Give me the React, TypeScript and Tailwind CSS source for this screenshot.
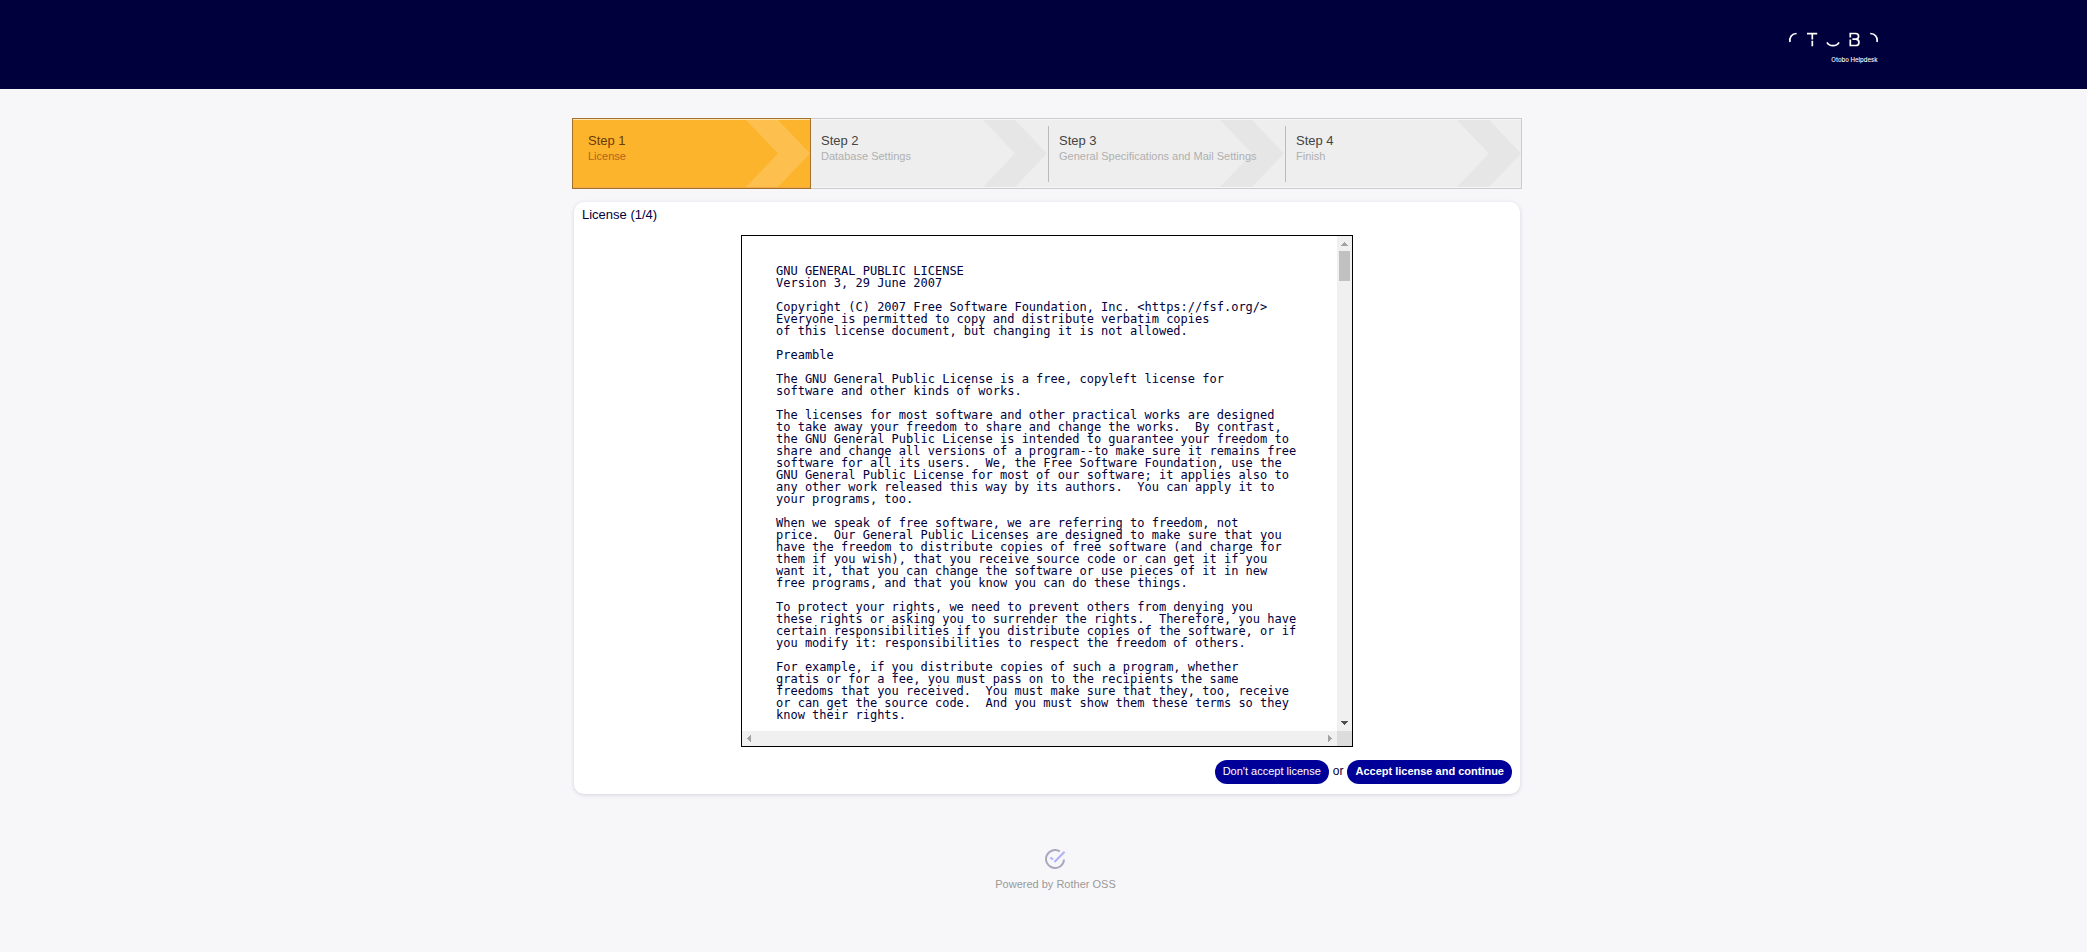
const LICENSE_TEXT = `GNU GENERAL PUBLIC LICENSE
Version 3, 29 June 2007

Copyright (C) 2007 Free Software Foundation, Inc. <https://fsf.org/>
Everyone is permitted to copy and distribute verbatim copies
of this license document, but changing it is not allowed.

Preamble

The GNU General Public License is a free, copyleft license for
software and other kinds of works.

The licenses for most software and other practical works are designed
to take away your freedom to share and change the works.  By contrast,
the GNU General Public License is intended to guarantee your freedom to
share and change all versions of a program--to make sure it remains free
software for all its users.  We, the Free Software Foundation, use the
GNU General Public License for most of our software; it applies also to
any other work released this way by its authors.  You can apply it to
your programs, too.

When we speak of free software, we are referring to freedom, not
price.  Our General Public Licenses are designed to make sure that you
have the freedom to distribute copies of free software (and charge for
them if you wish), that you receive source code or can get it if you
want it, that you can change the software or use pieces of it in new
free programs, and that you know you can do these things.

To protect your rights, we need to prevent others from denying you
these rights or asking you to surrender the rights.  Therefore, you have
certain responsibilities if you distribute copies of the software, or if
you modify it: responsibilities to respect the freedom of others.

For example, if you distribute copies of such a program, whether
gratis or for a fee, you must pass on to the recipients the same
freedoms that you received.  You must make sure that they, too, receive
or can get the source code.  And you must show them these terms so they
know their rights.`;

const STEPS = [
  { title: 'Step 1', label: 'License' },
  { title: 'Step 2', label: 'Database Settings' },
  { title: 'Step 3', label: 'General Specifications and Mail Settings' },
  { title: 'Step 4', label: 'Finish' },
];

function Logo() {
  return (
    <svg
      width="90"
      height="32"
      viewBox="0 0 90 32"
      fill="none"
      stroke="#ffffff"
      strokeWidth="1.7"
      role="img"
      aria-label="Otobo Helpdesk"
    >
      <path d="M2 10C1.2 5.2 3.8 1.6 8.6 1.5" />
      <path d="M19 1.6H29.2M24.3 1.6V7.4M24.3 8.8V14.2" />
      <path d="M39 10.4C41.4 14.8 48.6 14.8 51 10.4" />
      <path d="M62.3 5.4V1.5H67.6C71.6 1.5 71.6 7.2 67.6 7.2H64.4M67.8 7.2C72 7.4 72 13.5 67.8 13.5H62.3V7.4" />
      <path d="M82.2 1.5C87.2 1.6 89.8 5.2 89 10" />
      <text
        x="89.5"
        y="30"
        textAnchor="end"
        fontSize="6"
        fill="#ffffff"
        stroke="none"
        fontFamily="Inter, sans-serif"
        fontWeight="500"
      >
        Otobo Helpdesk
      </text>
    </svg>
  );
}

function Chevron({ active }: { active: boolean }) {
  return (
    <svg
      className={active ? 'text-[#fdc04f]' : 'text-[#e6e6e6]'}
      width="64"
      height="67"
      viewBox="0 0 64 67"
      fill="currentColor"
      aria-hidden="true"
    >
      <path d="M0 0H32L64 33.5L32 67H0L32 33.5Z" />
    </svg>
  );
}

function Steps() {
  return (
    <ol className="grid h-[71px] grid-cols-[239px_238px_237px_1fr] bg-[#eeeeee]">
      {STEPS.map((step, i) => {
        const active = i === 0;
        return (
          <li
            key={step.title}
            className={
              active
                ? 'relative flex border border-[#a56f2c] bg-[#fcb42c] pt-[14px] pl-[15px] shadow-[inset_0_1px_0_#fde3ae,inset_0_-1px_0_#f0a848]'
                : 'relative flex border-y border-[#cccccc] pt-[14px] pl-[10px] shadow-[inset_0_1px_0_#f5f5f5,inset_0_-1px_0_#f5f5f5] last:border-r'
            }
          >
            <div
              className={
                active || i === 3
                  ? 'absolute top-px right-0'
                  : 'absolute top-px right-[2px]'
              }
            >
              <Chevron active={active} />
            </div>
            {(i === 1 || i === 2) && (
              <span className="absolute top-[7px] right-0 h-14 w-px bg-[#bbbbbb]" />
            )}
            <div className="relative">
              <div
                className={
                  active
                    ? 'text-[13px] leading-4 text-[#6b3c05]'
                    : 'text-[13px] leading-4 text-[#444444]'
                }
              >
                {step.title}
              </div>
              <div
                className={
                  active
                    ? 'text-[11px] leading-[14px] text-[#b0651a]'
                    : 'text-[11px] leading-[14px] whitespace-nowrap text-[#b0b0b0]'
                }
              >
                {step.label}
              </div>
            </div>
          </li>
        );
      })}
    </ol>
  );
}

function Arrow({ d, dark = false }: { d: string; dark?: boolean }) {
  return (
    <svg
      width="15"
      height="15"
      viewBox="0 0 15 15"
      fill={dark ? '#505050' : '#a3a3a3'}
      shapeRendering="crispEdges"
      aria-hidden="true"
    >
      <path d={d} />
    </svg>
  );
}

function LicenseBox() {
  return (
    <div className="mx-auto grid h-[512px] w-[612px] max-w-full grid-cols-[1fr_15px] grid-rows-[1fr_15px] border border-black">
      <pre
        tabIndex={0}
        aria-label="License text"
        className="overflow-auto pt-[29px] pl-[34px] font-['DejaVu_Sans_Mono',monospace] text-[12px] leading-[12px] text-[#00003c] [scrollbar-width:none]"
      >
        {LICENSE_TEXT}
      </pre>
      <div className="flex flex-col items-center bg-[#f0f0f0]">
        <Arrow d="M7 6h1v1h1v1h1v1h1v1H4V9h1V8h1V7h1z" />
        <div className="h-[30px] w-[11px] bg-[#c1c1c1]" />
        <div className="mt-auto flex">
          <Arrow dark d="M4 5h7v1h-1v1H9v1H8v1H7V8H6V7H5V6H4z" />
        </div>
      </div>
      <div className="flex justify-between bg-[#f0f0f0]">
        <Arrow d="M9 4v7H8v-1H7V9H6V8H5V7h1V6h1V5h1V4z" />
        <Arrow d="M6 4h1v1h1v1h1v1h1v1H9v1H8v1H7v1H6z" />
      </div>
      <div className="bg-[#dcdcdc]" />
    </div>
  );
}

export default function App() {
  return (
    <div className="min-h-screen bg-[#f7f7fa] font-['Liberation_Sans',Arial,sans-serif] text-[#00003c]">
      <header className="flex h-[89px] items-start justify-end bg-[#00003c] pt-8 pr-[10%]">
        <Logo />
      </header>

      <main className="pt-[29px] pl-[7px]">
        <div className="mx-auto max-w-[950px]">
          <Steps />
          <section className="mx-[2px] mt-[13px] rounded-[10px] bg-white px-2 pt-1 pb-[10px] shadow-[0_1px_4px_rgba(0,0,56,0.15)]">
            <h1 className="text-[13px] leading-[18px]">License (1/4)</h1>
            <div className="pt-[11px]">
              <LicenseBox />
            </div>
            <div className="mt-[13px] flex items-center justify-end gap-1 text-[12px]">
              <button
                type="button"
                className="h-6 rounded-full bg-[#000099] px-2 pb-[2px] text-[11px] text-white"
              >
                Don't accept license
              </button>
              <span className="pb-[2px]">or</span>
              <button
                type="button"
                className="h-6 rounded-full bg-[#000099] px-2 pb-[2px] text-[11px] font-bold text-white"
              >
                Accept license and continue
              </button>
            </div>
          </section>
        </div>
      </main>

      <footer className="flex flex-col items-center gap-[7px] pt-[55px] pl-6 text-[11px] leading-4 text-[#999999]">
        <svg
          width="22"
          height="20"
          viewBox="0 0 22 20"
          fill="none"
          strokeWidth="2"
          aria-hidden="true"
        >
          <path d="M14.8 2.4A9 9 0 1 0 19 10.5" stroke="#a9a9bf" />
          <path d="M5.4 8.4L8 10.6M9.4 13L19.6 2.8" stroke="#b0b0fa" />
        </svg>
        <a href="#">Powered by Rother OSS</a>
      </footer>
    </div>
  );
}
